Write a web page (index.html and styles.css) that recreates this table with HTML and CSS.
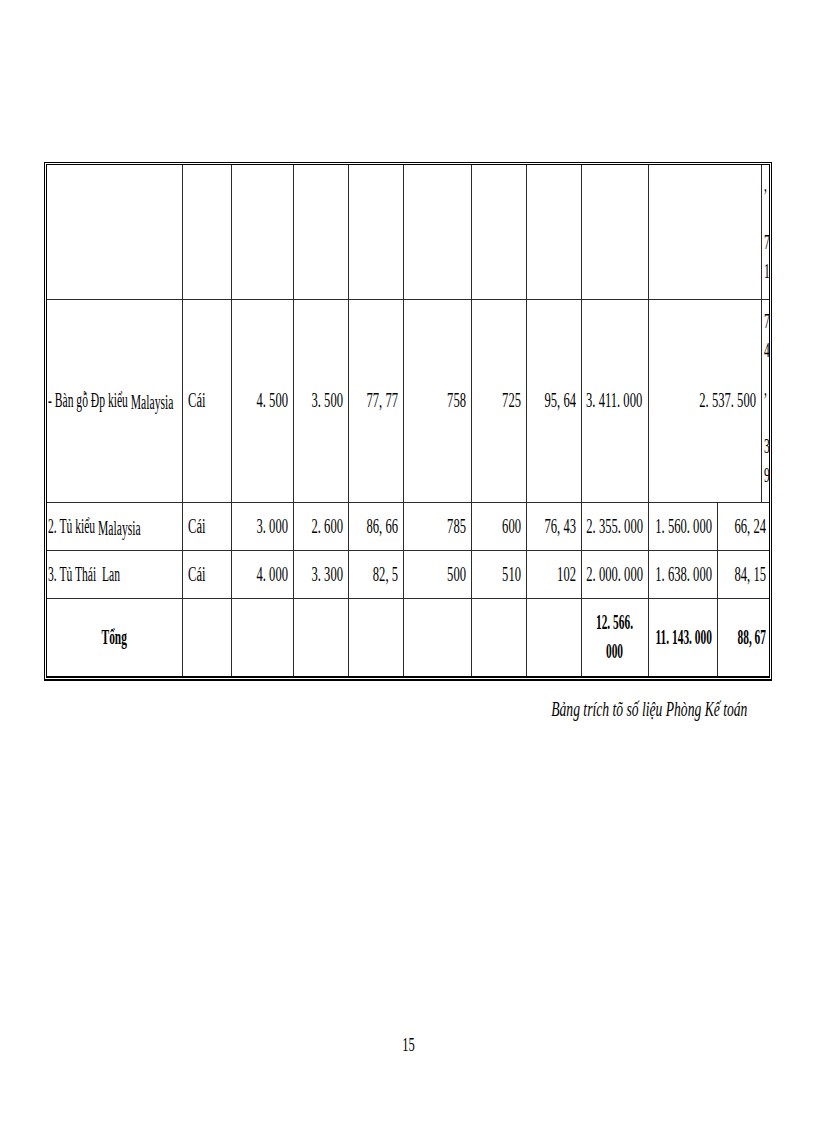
FILE: index.html
```html
<!DOCTYPE html>
<html lang="vi">
<head>
<meta charset="utf-8">
<title>Bảng trích số liệu</title>
<link rel="stylesheet" href="styles.css">
</head>
<body>
<div class="page">
  <div class="frame">
    <table class="grid">
      <colgroup>
        <col class="c-name"><col class="c-unit"><col class="c-a"><col class="c-b"><col class="c-c"><col class="c-d"><col class="c-e"><col class="c-f"><col class="c-g"><col class="c-h"><col class="c-i"><col class="c-j">
      </colgroup>
      <tr class="r1">
        <td></td><td></td><td></td><td></td><td></td><td></td><td></td><td></td><td></td>
        <td colspan="2"></td>
        <td class="vcell"><div class="vert v1"><span>,</span><span>&nbsp;</span><span>7</span><span>1</span></div></td>
      </tr>
      <tr class="r2">
        <td class="name"><div class="in l"><span class="t">- Bàn gỗ Đp kiểu <span class="low">Malaysia</span></span></div></td>
        <td><div class="in l"><span class="t">Cái</span></div></td>
        <td><div class="in r"><span class="t">4. 500</span></div></td>
        <td><div class="in r"><span class="t">3. 500</span></div></td>
        <td><div class="in r"><span class="t">77, 77</span></div></td>
        <td><div class="in r"><span class="t">758</span></div></td>
        <td><div class="in r"><span class="t">725</span></div></td>
        <td><div class="in r"><span class="t">95, 64</span></div></td>
        <td><div class="in r"><span class="t">3. 411. 000</span></div></td>
        <td colspan="2"><div class="in r"><span class="t">2. 537. 500</span></div></td>
        <td class="vcell"><div class="vert v2"><span>7</span><span>4</span><span class="gap">,</span><span>&nbsp;</span><span>3</span><span>9</span></div></td>
      </tr>
      <tr class="r3">
        <td class="name"><div class="in l"><span class="t">2. Tủ kiểu <span class="low">Malaysia</span></span></div></td>
        <td><div class="in l"><span class="t">Cái</span></div></td>
        <td><div class="in r"><span class="t">3. 000</span></div></td>
        <td><div class="in r"><span class="t">2. 600</span></div></td>
        <td><div class="in r"><span class="t">86, 66</span></div></td>
        <td><div class="in r"><span class="t">785</span></div></td>
        <td><div class="in r"><span class="t">600</span></div></td>
        <td><div class="in r"><span class="t">76, 43</span></div></td>
        <td><div class="in r"><span class="t">2. 355. 000</span></div></td>
        <td><div class="in r"><span class="t">1. 560. 000</span></div></td>
        <td class="tight" colspan="2"><div class="in r"><span class="t">66, 24</span></div></td>
      </tr>
      <tr class="r4">
        <td class="name"><div class="in l"><span class="t">3. Tủ Thái&nbsp; Lan</span></div></td>
        <td><div class="in l"><span class="t">Cái</span></div></td>
        <td><div class="in r"><span class="t">4. 000</span></div></td>
        <td><div class="in r"><span class="t">3. 300</span></div></td>
        <td><div class="in r"><span class="t">82, 5</span></div></td>
        <td><div class="in r"><span class="t">500</span></div></td>
        <td><div class="in r"><span class="t">510</span></div></td>
        <td><div class="in r"><span class="t">102</span></div></td>
        <td><div class="in r"><span class="t">2. 000. 000</span></div></td>
        <td><div class="in r"><span class="t">1. 638. 000</span></div></td>
        <td class="tight" colspan="2"><div class="in r"><span class="t">84, 15</span></div></td>
      </tr>
      <tr class="r5">
        <td class="b"><div class="in c"><span class="t">Tổng</span></div></td>
        <td></td><td></td><td></td><td></td><td></td><td></td><td></td>
        <td class="b"><div class="in c"><span class="t">12. 566.<br>000</span></div></td>
        <td class="b"><div class="in r"><span class="t">11. 143. 000</span></div></td>
        <td class="b tight" colspan="2"><div class="in r"><span class="t">88, 67</span></div></td>
      </tr>
    </table>
  </div>
  <p class="caption"><span class="t">Bảng trích tõ số liệu Phòng Kế toán</span></p>
  <p class="pageno"><span class="t">15</span></p>
</div>
</body>
</html>
```

FILE: styles.css
```css
html, body {
  margin: 0;
  padding: 0;
  background: #fff;
}

body {
  font-family: "Liberation Serif", "Times New Roman", serif;
  font-size: 20px;
  color: #000;
}

.page {
  width: 728px;
  margin: 0 0 0 44px;
  padding-top: 162px;
}

.frame {
  box-sizing: border-box;
  width: 728px;
  border: 3px double #000;
  border-bottom: 5px double #000;
  overflow: hidden;
}

.grid {
  width: 722px;
  table-layout: fixed;
  border-collapse: collapse;
  border-style: hidden;
}

.c-name { width: 135px; }
.c-unit { width: 49px; }
.c-a { width: 62px; }
.c-b { width: 55px; }
.c-c { width: 55px; }
.c-d { width: 68px; }
.c-e { width: 55px; }
.c-f { width: 55px; }
.c-g { width: 67px; }
.c-h { width: 69px; }
.c-i { width: 44px; }
.c-j { width: 8px; }

.grid td {
  border: 1px solid #2b2b2b;
  padding: 0 5px;
  vertical-align: middle;
  line-height: 29px;
  white-space: nowrap;
}

.r1 { height: 134px; }
.r2 { height: 203px; }
.r3 { height: 48px; }
.r4 { height: 48px; }
.r5 { height: 78px; }

.in {
  display: flex;
  align-items: center;
}

.in.l { justify-content: flex-start; }
.in.r { justify-content: flex-end; }
.in.c { justify-content: center; text-align: center; }

.t {
  display: inline-block;
  flex: none;
  white-space: nowrap;
  transform: scaleX(0.63);
}

.l .t { transform-origin: left center; }
.r .t { transform-origin: right center; }
.c .t { transform-origin: center center; }

.grid td.name { padding-left: 1px; }
.grid td.name .t { transform: scaleX(0.58); }
.grid td.tight { padding-right: 3px; }

.b { font-weight: bold; }
.b .t { transform: scaleX(0.57); }

.low {
  position: relative;
  top: 2px;
}

.grid td.vcell {
  padding: 0;
  vertical-align: top;
}

.vert {
  padding-left: 2px;
  line-height: 29px;
}

.vert span {
  display: block;
  transform: scaleX(0.58);
  transform-origin: left center;
}

.v1 { padding-top: 5px; }
.v2 { padding-top: 7px; }
.vert .gap { margin-top: 9px; }

.caption {
  margin: 14px 0 0 0;
  padding-right: 25px;
  text-align: right;
  font-style: italic;
  font-size: 20px;
  line-height: 29px;
}

.caption .t {
  transform: scaleX(0.68);
  transform-origin: right center;
}

.pageno {
  margin: 306px 0 0 0;
  text-align: center;
  font-size: 19px;
  line-height: 29px;
}

.pageno .t {
  transform: scaleX(0.66);
  transform-origin: center center;
}
```
